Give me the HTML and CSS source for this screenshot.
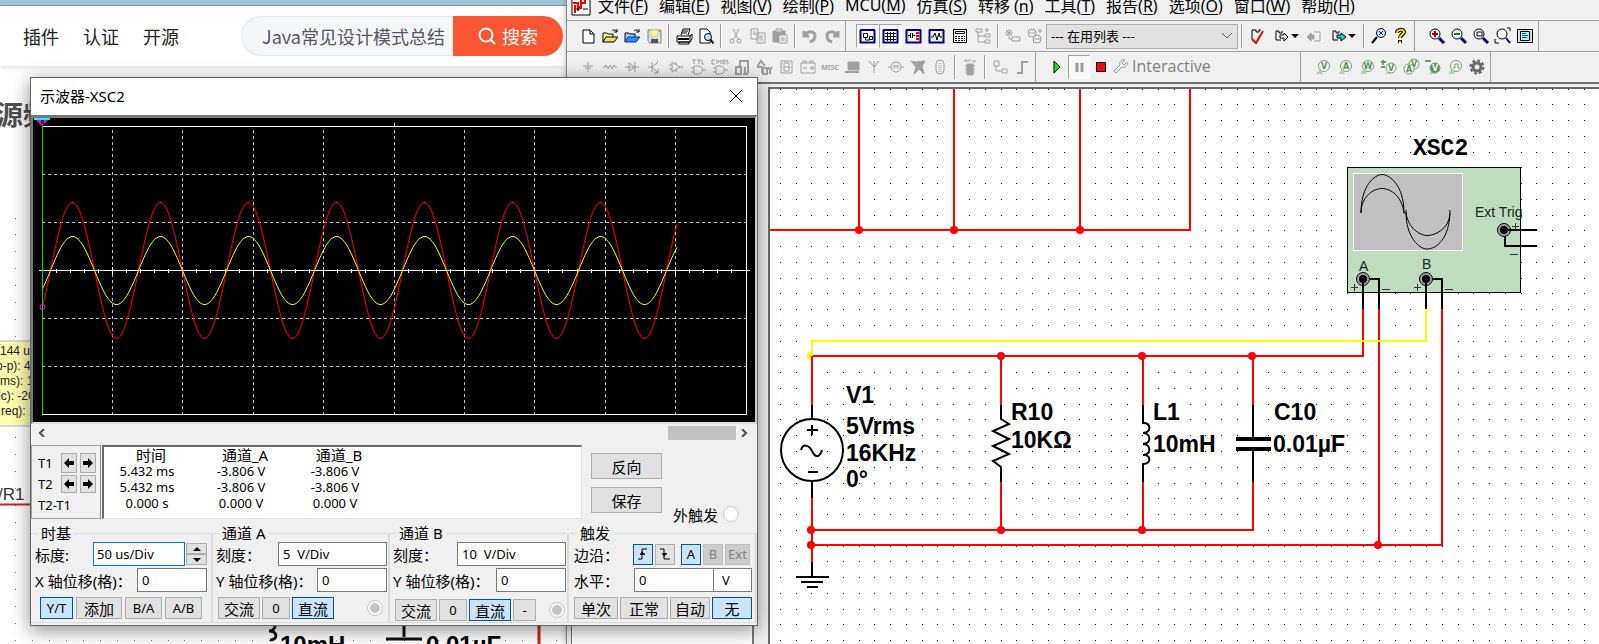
FILE: index.html
```html
<!DOCTYPE html>
<html lang="zh-CN">
<head>
    <meta charset="UTF-8">
    <title>示波器-XSC2</title>
    <link rel="stylesheet" href="styles.css">
</head>
<body>
<div class="desktop">

    <!-- browser window in the back -->
    <div class="site">
        <div class="site-strip"></div>
        <header class="site-header">
            <nav class="site-nav">
                <a href="#">插件</a>
                <a href="#">认证</a>
                <a href="#">开源</a>
            </nav>
            <form class="search">
                <input type="text" aria-label="搜索" placeholder="Java常见设计模式总结">
                <button type="button">
                    <svg width="18" height="18" viewBox="0 0 18 18"><circle cx="8" cy="8" r="6.5"/><path d="M13 13l4 4"/></svg>
                    搜索
                </button>
            </form>
        </header>
        <h1 class="post-title">源频</h1>
        <svg class="post-image">
            <g id="post-dots" fill="#777"></g>
            <rect x="-2" y="147" width="60" height="85" fill="#fffbb0" stroke="#a9b8e0"/>
            <g class="post-note">
                <text x="0" y="161">144 uA</text>
                <text x="-4" y="176">o-p): 48</text>
                <text x="0" y="191">ms): 1</text>
                <text x="-2" y="206">lc): -20</text>
                <text x="1" y="221">req): 1</text>
            </g>
            <path d="M0 310.500h40" stroke="#d02020" stroke-width="2"/>
            <text class="post-ref" x="-2" y="306">/R1</text>
            <path d="M539 425v30" stroke="#d02020" stroke-width="3"/>
            <path d="M269 428c8 -2 8 9 0 9c9 0 9 9 1 9M404 425v18M386 445h36" fill="none" stroke="#111" stroke-width="3"/>
            <text class="post-part" x="280" y="459">10mH</text>
            <text class="post-part" x="426" y="459">0.01µF</text>
        </svg>
    </div>

    <!-- circuit editor -->
    <div class="app">
        <nav class="menubar">
            <svg class="app-logo" width="20" height="24" viewBox="0 0 20 24"><path d="M1 1h18v21H1z" fill="#fff" stroke="#000"/><path d="M2 10h5v8M4 12v8M10 6v10M10 14H6M10 10h4V5" fill="none" stroke="#e00" stroke-width="2"/><path d="M5 16h4M12 16h5" stroke="#000"/></svg>
            <a href="#">文件(<u>F</u>)</a>
            <a href="#">编辑(<u>E</u>)</a>
            <a href="#">视图(<u>V</u>)</a>
            <a href="#">绘制(<u>P</u>)</a>
            <a href="#">MCU(<u>M</u>)</a>
            <a href="#">仿真(<u>S</u>)</a>
            <a href="#">转移 (<u>n</u>)</a>
            <a href="#">工具(<u>T</u>)</a>
            <a href="#">报告(<u>R</u>)</a>
            <a href="#">选项(<u>O</u>)</a>
            <a href="#">窗口(<u>W</u>)</a>
            <a href="#">帮助(<u>H</u>)</a>
        </nav>

        <div class="toolrow">
            <div class="toolbar">
                <button class="tool" aria-label="新建"><svg viewBox="0 0 18 18"><path d="M4 3h7l4 4v9H4zM11 3v4h4" fill="#fff"/></svg></button>
                <button class="tool" aria-label="打开"><svg viewBox="0 0 18 18"><path d="M2 15V6h4l1 1h5v3" fill="#ff9"/><path d="M2 15l3-5h12l-4 5z" fill="#e8e070"/><path d="M11 4c2-2 4-1 5 1M16 2v3h-3"/></svg></button>
                <button class="tool" aria-label="打开示例"><svg viewBox="0 0 18 18"><path d="M2 15V6h4l1 1h5v3" fill="#9cf"/><path d="M2 15l3-5h12l-4 5z" fill="#38f" stroke="#003a9c"/><path d="M11 4c2-2 4-1 5 1M16 2v3h-3"/></svg></button>
                <button class="tool" aria-label="保存"><svg viewBox="0 0 18 18"><path d="M3 3h13v13H5l-2-2z" fill="#ddd" stroke="#888"/><path d="M6 3h7v6H6z" fill="#ff6" stroke="#ccc"/><path d="M6 12h7v4H6z" fill="#555" stroke="none"/><path d="M14 4h1" stroke="#e00"/></svg></button>
                <span class="sep"></span>
                <button class="tool" aria-label="打印"><svg viewBox="0 0 18 18"><path d="M6 8l2-6h7l-2 6M2 9h13v6H2zM4 15h10v2H4zM15 9l2-2v5l-2 3M8 4h5M7 6h5" fill="#fff"/><path d="M3 12h11" stroke-width="2"/></svg></button>
                <button class="tool" aria-label="打印预览"><svg viewBox="0 0 18 18"><path d="M3 2h7l3 3v11H3z" fill="#fff"/><circle cx="11" cy="10" r="3.500" fill="#aef"/><path d="M13.500 12.500l3 4" stroke-width="2"/></svg></button>
                <span class="sep"></span>
                <button class="tool off" aria-label="剪切"><svg viewBox="0 0 18 18"><path d="M6 2l5 10M12 2L7 12"/><circle cx="5" cy="14" r="2"/><circle cx="12" cy="14" r="2"/></svg></button>
                <button class="tool off" aria-label="复制"><svg viewBox="0 0 18 18"><path d="M2 2h7v10H2zM8 6h8v10H8zM4 5h3M4 7h3M10 9h4M10 11h4M10 13h4"/></svg></button>
                <button class="tool off" aria-label="粘贴"><svg viewBox="0 0 18 18"><path d="M2 4h12v11H2z" fill="#a0a0a0"/><path d="M5 2h6v3H5z" fill="#ddd"/><path d="M8 8h8v8H8z" fill="#eee"/><path d="M10 11h4M10 13h4"/></svg></button>
                <span class="sep"></span>
                <button class="tool off" aria-label="撤消"><svg viewBox="0 0 18 18"><path d="M3 4v5h5M4 9c3-6 10-5 10 0c0 3-2 5-5 6" stroke-width="3"/></svg></button>
                <button class="tool off" aria-label="重做"><svg viewBox="0 0 18 18"><path d="M15 4v5h-5M14 9c-3-6-10-5-10 0c0 3 2 5 5 6" stroke-width="3"/></svg></button>
            </div>
            <div class="toolbar wide">
                <button class="tool on" aria-label="设计工具箱"><svg class="navy" viewBox="0 0 18 18"><path d="M1.500 3v12.500h14V3M1 3h15" stroke-width="2"/><path d="M4.500 6.500h4v4h-4zM10.500 9.500h3v3h-3zM6.500 11v2h4" stroke="#000"/></svg></button>
                <button class="tool on" aria-label="电子表格"><svg class="navy" viewBox="0 0 18 18"><path d="M1.500 3v12.500h14V3M1 3h15" stroke-width="2"/><path d="M3 6.500h11M3 9.500h11M3 12.500h11M5.500 5v9M8.500 5v9M11.500 5v9" stroke="#000"/></svg></button>
                <button class="tool" aria-label="SPICE网表"><svg class="navy" viewBox="0 0 18 18"><path d="M1.500 3v12.500h14V3M1 3h15" stroke-width="2" /><path d="M3 8.500h2M5.500 6v5M7.500 6v5M8 8.500h2" stroke="#000"/><path d="M12.500 5v9" stroke="#e00" stroke-width="3" stroke-dasharray="2 1"/></svg></button>
                <button class="tool" aria-label="图示仪"><svg class="navy" viewBox="0 0 18 18"><path d="M1.500 3v12.500h14V3M1 3h15" stroke-width="2"/><path d="M3 10h2l2-4 2 7 2-7 1 4h2" stroke="#000"/></svg></button>
                <button class="tool" aria-label="后处理器"><svg viewBox="0 0 18 18"><path d="M2.500 2.500h13v13h-13z" fill="#fff"/><path d="M4.500 4.500h9v2h-9z"/><path d="M4 9.500h10M4 11.500h10M4 13.500h10" stroke-dasharray="2 1"/></svg></button>
                <button class="tool off" aria-label="层次"><svg viewBox="0 0 18 18"><path d="M2 2h6v3H2zM11 7h5v3h-5zM11 13h5v3h-5zM4 5v10h7M4 9h7M13 5V1M11 3h4"/></svg></button>
                <span class="sep"></span>
                <button class="tool off" aria-label="新建元器件"><svg viewBox="0 0 18 18"><path d="M5 2v8M1 6h8M2 3l6 6M8 3L2 9M8 10h8v4H8zM5 10v2h3"/></svg></button>
                <button class="tool off" aria-label="数据库"><svg viewBox="0 0 18 18"><circle cx="6" cy="6" r="4"/><circle cx="11" cy="12" r="4"/><path d="M3 6h6M8 12h6M12 4h4M14 2v4"/></svg></button>
                <select class="inuse" aria-label="在用列表"><option>--- 在用列表 ---</option></select>
                <span class="sep"></span>
                <button class="tool" aria-label="电气法则查验"><svg viewBox="0 0 18 18"><path d="M4 12V3h4v2h3V3h2"/><path d="M4 12l4 4 7-12" stroke="#e00" stroke-width="2"/></svg></button>
                <button class="tool drop" aria-label="转移到布局"><svg viewBox="0 0 18 18"><path d="M3 4h3v2h3V4M3 4v9h5"/><path d="M7 8h4V6l4 4-4 4v-3H7z" fill="#fff"/></svg><i></i></button>
                <button class="tool off" aria-label="反向注解"><svg viewBox="0 0 18 18"><path d="M2 10l4-4v2h3v4H6v2z" fill="#a0a0a0"/><path d="M9 5h6v9H9"/></svg></button>
                <button class="tool drop" aria-label="正向注解"><svg viewBox="0 0 18 18"><path d="M3 4h3v2h3V4M3 4v9h5"/><path d="M7 8h4V6l5 4-5 4v-3H7z" fill="#0dd"/></svg><i></i></button>
                <span class="sep"></span>
                <button class="tool" aria-label="查找"><svg viewBox="0 0 18 18"><circle cx="11" cy="6" r="4.500" fill="#cfe8e8"/><path d="M9 4l4 4M13 4L9 8" stroke="#00c"/><path d="M7 10l-5 6" stroke-width="2"/></svg></button>
                <button class="tool" aria-label="帮助"><svg viewBox="0 0 18 18"><path d="M5 6c0-4 7-4 7-1c0 2-4 3-4 6M8 13v3" stroke-width="4"/><path d="M5 6c0-4 7-4 7-1c0 2-4 3-4 6M8 14v2" stroke="#fd0" stroke-width="2"/></svg></button>
            </div>
            <div class="toolbar zoom">
                <button class="tool" aria-label="放大"><svg viewBox="0 0 18 18"><circle cx="7" cy="7" r="5" fill="#fff"/><path d="M4 7h6M7 4v6" stroke="#b00000" stroke-width="2"/><path d="M11 11l5 5" stroke="#000080" stroke-width="3"/></svg></button>
                <button class="tool" aria-label="缩小"><svg viewBox="0 0 18 18"><circle cx="7" cy="7" r="5" fill="#fff"/><path d="M4 7h6" stroke="#080" stroke-width="2"/><path d="M11 11l5 5" stroke="#000080" stroke-width="3"/></svg></button>
                <button class="tool" aria-label="缩放区域"><svg viewBox="0 0 18 18"><circle cx="7" cy="7" r="5" fill="#fff"/><path d="M5 5h5v4H5z"/><path d="M11 11l5 5" stroke="#000080" stroke-width="3"/></svg></button>
                <button class="tool" aria-label="缩放页面"><svg viewBox="0 0 18 18"><circle cx="8" cy="7" r="5" fill="#fff"/><path d="M1 12v4h4M13 1h3v3"/><path d="M12 11l4 5" stroke="#000080" stroke-width="2"/></svg></button>
                <button class="tool" aria-label="全屏"><svg viewBox="0 0 18 18"><path d="M1.500 2.500h15v13h-15z" fill="#ddd"/><path d="M4.500 4.500h9v9h-9z" fill="#9ff"/><path d="M6 6.500h4M6 8.500h6M6 10.500h5" stroke="#066"/></svg></button>
            </div>
        </div>

        <div class="toolrow">
            <div class="toolbar">
                <button class="tool off" aria-label="源"><svg viewBox="0 0 18 18"><path d="M9 4v4M4 8h10M6 10h6M9 10v4"/></svg></button>
                <button class="tool off" aria-label="基本"><svg viewBox="0 0 18 18"><path d="M2 9h2l1-2 2 4 2-4 2 4 2-4 1 2h2"/></svg></button>
                <button class="tool off" aria-label="二极管"><svg viewBox="0 0 18 18"><path d="M2 9h14M6 5v8l6-4zM12 4v10"/></svg></button>
                <button class="tool off" aria-label="晶体管"><svg viewBox="0 0 18 18"><path d="M3 9h4M7 4v10M7 9l6-5M7 9l6 6M13 11v4h-4"/></svg></button>
                <button class="tool off" aria-label="模拟"><svg viewBox="0 0 18 18"><path d="M5 4v10l8-5zM2 7h3M2 11h3M13 9h3M9 4v3M9 11v3"/></svg></button>
                <button class="tool off" aria-label="TTL"><svg viewBox="0 0 18 18"><path d="M5 8h4c6 0 6 8 0 8H5zM2 10h3M2 14h3M13 12h4M3 2h4M5 2v4M8 2h4M10 2v4M13 2v4h2"/></svg></button>
                <button class="tool off" aria-label="CMOS"><svg viewBox="0 0 18 18"><path d="M5 8h4c6 0 6 8 0 8H5zM2 10h3M2 14h3M13 12h4M4 2H1v4h3M6 6V2l2 2 2-2v4M12 2h2v4h-2zM17 2h-1v2h1v2h-1"/></svg></button>
                <button class="tool off" aria-label="其他数字"><svg viewBox="0 0 18 18"><path d="M7 9V3h8v12M3 9h5v7H3zM12 9v7M10 16h5" stroke-width="2"/></svg></button>
                <button class="tool off" aria-label="混合"><svg viewBox="0 0 18 18"><path d="M2 9l4-6 4 5M2 9h5v6M8 10h4v6H8zM13 9l2 3 2-3M15 12v4" stroke-width="2"/></svg></button>
                <button class="tool off" aria-label="指示器"><svg viewBox="0 0 18 18"><path d="M4 3h11v12H4zM7 5h5v8H7zM7 9h5M5 5v1M5 9v1M14 9v1"/></svg></button>
                <button class="tool off" aria-label="功率"><svg viewBox="0 0 18 18"><path d="M2 5h14v10H2zM4 5V3h3v2M11 5V3h3v2M4 10h4M11 10h4M13 8v4"/></svg></button>
                <button class="tool off misc" aria-label="杂项">MISC</button>
                <button class="tool off" aria-label="外设"><svg viewBox="0 0 18 18"><path d="M5 4h11v8H5z" fill="#a0a0a0"/><path d="M2 14h14" stroke-width="2"/></svg></button>
                <button class="tool off" aria-label="射频"><svg viewBox="0 0 18 18"><path d="M4 3l5 6 5-6M9 3v12"/></svg></button>
                <button class="tool off" aria-label="机电"><svg viewBox="0 0 18 18"><circle cx="9" cy="9" r="5"/><path d="M1 9h3M14 9h3M7 11V7l2 2 2-2v4"/></svg></button>
                <button class="tool off" aria-label="NI元器件"><svg viewBox="0 0 18 18"><path d="M2 3c5 2 9 0 14 0l-3 5 2 8-5-5-5 5 2-7z" fill="#a0a0a0"/></svg></button>
                <button class="tool off" aria-label="连接器"><svg viewBox="0 0 18 18"><rect x="5" y="2" width="8" height="14" rx="4"/><path d="M8 5v9M10 5v9" stroke-dasharray="1 1"/></svg></button>
                <span class="sep"></span>
                <button class="tool off" aria-label="MCU"><svg viewBox="0 0 18 18"><path d="M6 6h6v11H6z" fill="#a0a0a0"/><path d="M4 8h10M4 11h10M4 14h10M4 4V2h2v2M8 4V2h2M12 2v2h2V2"/></svg></button>
                <span class="sep"></span>
                <button class="tool off" aria-label="层次块"><svg viewBox="0 0 18 18"><path d="M3 3h5v5H3zM5 8v5h5M11 11h5v4h-5z"/></svg></button>
                <button class="tool off" aria-label="总线"><svg viewBox="0 0 18 18"><path d="M4 15h5V4h6" stroke-width="2"/></svg></button>
            </div>
            <div class="toolbar sim">
                <button class="tool" aria-label="运行"><svg viewBox="0 0 18 18"><path d="M6 3v12l6-6z" fill="#0e0"/></svg></button>
                <button class="tool on" aria-label="暂停"><svg viewBox="0 0 18 18"><path d="M7 5v9M12 5v9" stroke="#999" stroke-width="3"/></svg></button>
                <button class="tool" aria-label="停止"><svg viewBox="0 0 18 18"><path d="M4.500 4.500h9v9h-9z" fill="red"/></svg></button>
                <a class="mode" href="#"><svg width="18" height="18" viewBox="0 0 18 18"><path d="M4 16l-2-2 6-6c-1-4 2-6 5-5l-3 3 2 2 3-3c1 4-2 6-5 5z" fill="none" stroke="#999"/></svg>Interactive</a>
            </div>
            <div class="toolbar probes">
                <button class="tool" aria-label="电压探针"><svg class="probe" viewBox="0 0 18 18"><path d="M2 16l4-5 3 5z"/><circle cx="10" cy="8" r="5.500"/><text x="10" y="11">V</text></svg></button>
                <button class="tool" aria-label="电流探针"><svg class="probe" viewBox="0 0 18 18"><path d="M2 16l4-5 3 5z"/><circle cx="10" cy="8" r="5.500"/><text x="10" y="11">A</text></svg></button>
                <button class="tool" aria-label="功率探针"><svg class="probe" viewBox="0 0 18 18"><path d="M2 16l4-5 3 5z"/><circle cx="10" cy="8" r="5.500"/><text x="10" y="11">W</text></svg></button>
                <button class="tool" aria-label="差分探针"><svg class="probe" viewBox="0 0 18 18"><path d="M5 16l3-4 3 4z"/><circle cx="11" cy="10" r="5"/><text x="11" y="13">V</text><path d="M1 4h5M3 2v5M1 9h4" stroke="#6f9a6f" stroke-width="2"/></svg></button>
                <button class="tool" aria-label="电压电流探针"><svg class="probe" viewBox="0 0 18 18"><circle cx="12" cy="6" r="5"/><text x="12" y="9">V</text><circle cx="7" cy="11" r="5"/><text x="7" y="14">A</text></svg></button>
                <button class="tool" aria-label="参考探针"><svg class="probe" viewBox="0 0 18 18"><path d="M5 16l3-4 3 4z"/><path d="M1 3h6" stroke="#6f9a6f" stroke-width="2"/><circle class="dark" cx="11" cy="10" r="5"/><text class="light" x="11" y="13">V</text></svg></button>
                <button class="tool" aria-label="数字探针"><svg class="probe" viewBox="0 0 18 18"><path d="M2 16l4-5 3 5z"/><circle cx="10" cy="8" r="5.500"/><path d="M7 10h2V6h3v4h2" fill="none" stroke="#6f9a6f"/></svg></button>
                <button class="tool" aria-label="探针设置"><svg viewBox="0 0 18 18"><circle cx="9" cy="9" r="4" stroke="#666" stroke-width="3"/><circle cx="9" cy="9" r="6.500" stroke="#666" stroke-width="2" stroke-dasharray="3 2"/></svg></button>
            </div>
        </div>

        <div class="workspace">
            <div class="toolbox"></div>
            <div class="sheet">
                <svg class="schematic">
                    <g transform="translate(-770 -89)">
                        <g id="grid-dots" shape-rendering="crispEdges"></g>
                        <rect x="1347.500" y="167.500" width="173" height="125" fill="#c0dcc0" stroke="#000"/>
                        <rect x="1353.500" y="173.500" width="109" height="77" fill="#c0c0c0" stroke="#fff"/>
                        <g fill="none" stroke="#000">
                            <path d="M1361 213c0 -28 14 -38.500 21 -38.500s22 10 22 38.500M1361 213c0 -16 12 -24.500 21 -24.500s20 8 22 24.500l2 0c0 22 12 36 21 36s23 -10 23 -39M1406 210c0 15 12 25.500 21 25.500s22 -7 23 -22"/>
                        </g>
                        <g class="wire">
                            <path d="M770 230H1190V80M859 230V80M954 230V80M1080 230V80"/>
                            <path d="M812 405V356H1363V309M812 498V562M812 530H1253V482M812 545H1442V309M1379 309V545"/>
                            <path d="M1001 356V405M1001 482V530M1143 356V405M1143 482V530M1253 356V405"/>
                            <path d="M812 356V341H1426V309" stroke="#ff0"/>
                        </g>
                        <g class="pin">
                            <path d="M812 405V419M812 481V498M812 562V577M796 577H829M801 582H823M807 587H818"/>
                            <circle cx="812" cy="450" r="31"/>
                            <path d="M807 430H818M812 425V435M808 472H818M801 450C803 443 809 445 812 451S819 459 822 450"/>
                            <path d="M1001 405V419L1009 424L993 431L1009 439L993 446L1009 454L993 461L1001 467V482"/>
                            <path d="M1143 405V423C1151 422 1152 433 1143 433C1151 433 1152 444 1143 444C1151 444 1152 455 1143 455C1151 454 1152 464 1143 464V482"/>
                            <path d="M1253 405V438M1253 451V482"/>
                            <path d="M1236 439H1271M1236 449H1271" stroke-width="4"/>
                            <path d="M1363 279V309M1363 279H1379V309M1426 279V309M1426 279H1442V309M1504 230H1537M1505 230V246H1537"/>
                        </g>
                        <g fill="#a0a0a4" stroke="#000">
                            <circle cx="1363" cy="279" r="6.500"/><circle cx="1426" cy="279" r="6.500"/><circle cx="1504" cy="230" r="6.500"/>
                        </g>
                        <circle cx="1363" cy="279" r="4"/><circle cx="1426" cy="279" r="4"/><circle cx="1504" cy="230" r="4"/>
                        <path class="pin" d="M1363 279V292M1426 279V292M1504 230H1520"/>
                        <path d="M1351 287.500H1358M1354.500 284V291M1382 289.500H1390M1414 287.500H1421M1417.500 284V291M1445 289.500H1453M1512 226.500H1519M1515.500 223V230M1510 254.500H1518" stroke="#333"/>
                        <g class="dot">
                            <circle cx="859" cy="230" r="4"/><circle cx="954" cy="230" r="4"/><circle cx="1080" cy="230" r="4"/>
                            <circle cx="1001" cy="356" r="4"/><circle cx="1142" cy="356" r="4"/><circle cx="1252" cy="356" r="4"/>
                            <circle cx="811" cy="530" r="4"/><circle cx="1001" cy="530" r="4"/><circle cx="1142" cy="530" r="4"/>
                            <circle cx="811" cy="545" r="4"/><circle cx="1378" cy="545" r="4"/>
                            <path d="M811 352v8a4 4 0 0 1 0 -8z" fill="#ff0"/>
                        </g>
                        <g class="part">
                            <text x="846" y="403">V1</text>
                            <text x="846" y="434">5Vrms</text>
                            <text x="846" y="461">16KHz</text>
                            <text x="846" y="487">0°</text>
                            <text x="1011" y="420">R10</text>
                            <text x="1011" y="448">10KΩ</text>
                            <text x="1153" y="420">L1</text>
                            <text x="1153" y="452">10mH</text>
                            <text x="1274" y="420">C10</text>
                            <text x="1273" y="452">0.01µF</text>
                        </g>
                        <text class="scope-name" x="1413" y="155">XSC2</text>
                        <g class="pin-name">
                            <text x="1475" y="217">Ext Trig</text>
                            <text x="1359" y="271">A</text>
                            <text x="1422" y="269">B</text>
                        </g>
                    </g>
                </svg>
            </div>
        </div>
    </div>

    <!-- oscilloscope -->
    <div class="dialog">
        <div class="titlebar">
            <span>示波器-XSC2</span>
            <button class="close" aria-label="关闭"><svg width="12" height="12" viewBox="0 0 12 12"><path d="M0 0l12 12M12 0L0 12" stroke="#000"/></svg></button>
        </div>
        <div class="screen">
            <svg id="scope" width="100%" height="304" viewBox="34 118 720 304" preserveAspectRatio="xMinYMin">
                <g id="scope-grid" stroke="#c0c0c0" stroke-dasharray="3 3" shape-rendering="crispEdges"></g>
                <path id="scope-axis" stroke="#fff" fill="none" shape-rendering="crispEdges"></path>
                <path id="wave-a" stroke="#f00" fill="none"></path>
                <path id="wave-b" stroke="#ff0" fill="none"></path>
                <path d="M42.500 126V414" stroke="#00e000"/>
                <path d="M34 118h16l-8 8z" fill="#f0f"/><path d="M34 118h16v2H34z" fill="#0ff"/><path d="M41 120h3v4h-3z" fill="#330"/>
                <circle cx="42.500" cy="307" r="2.500" fill="none" stroke="#f0f"/>
            </svg>
        </div>
        <div class="scroll">
            <button aria-label="向左"><svg width="6" height="8" viewBox="0 0 6 8"><path d="M5 0L1 4l4 4"/></svg></button>
            <div class="track"><div class="thumb"></div></div>
            <button aria-label="向右"><svg width="6" height="8" viewBox="0 0 6 8"><path d="M1 0l4 4-4 4"/></svg></button>
        </div>
        <div class="readout">
            <div class="cursors">
                <span>T1</span>
                <button class="btn" aria-label="T1 向左"><svg width="10" height="10" viewBox="0 0 10 10"><path d="M0 5l5-5v3h5v4H5v3z"/></svg></button>
                <button class="btn" aria-label="T1 向右"><svg width="10" height="10" viewBox="0 0 10 10"><path d="M10 5L5 0v3H0v4h5v3z"/></svg></button>
                <span>T2</span>
                <button class="btn" aria-label="T2 向左"><svg width="10" height="10" viewBox="0 0 10 10"><path d="M0 5l5-5v3h5v4H5v3z"/></svg></button>
                <button class="btn" aria-label="T2 向右"><svg width="10" height="10" viewBox="0 0 10 10"><path d="M10 5L5 0v3H0v4h5v3z"/></svg></button>
                <span class="diff">T2-T1</span>
            </div>
            <div class="values">
                <table>
                    <tr><th>时间</th><th>通道_A</th><th>通道_B</th></tr>
                    <tr><td>5.432 ms</td><td>-3.806 V</td><td>-3.806 V</td></tr>
                    <tr><td>5.432 ms</td><td>-3.806 V</td><td>-3.806 V</td></tr>
                    <tr><td>0.000 s</td><td>0.000 V</td><td>0.000 V</td></tr>
                </table>
            </div>
            <div class="actions">
                <button class="btn">反向</button>
                <button class="btn">保存</button>
            </div>
            <label class="ext">外触发 <input type="radio" name="ext"></label>
        </div>
        <div class="groups">
            <fieldset>
                <legend>时基</legend>
                <div class="line">
                    <label for="timebase">标度:</label>
                    <input class="text w92 focus" type="text" id="timebase" value="50 us/Div">
                    <span class="spin"><button class="btn" aria-label="增加"><i class="up"></i></button><button class="btn" aria-label="减少"><i class="down"></i></button></span>
                </div>
                <div class="line">
                    <label for="xpos">X 轴位移(格)：</label>
                    <input class="text w70" type="text" id="xpos" value="0">
                </div>
                <div class="line buttons indent">
                    <button class="btn active w33">Y/T</button>
                    <button class="btn w46">添加</button>
                    <button class="btn w37">B/A</button>
                    <button class="btn w37">A/B</button>
                </div>
            </fieldset>
            <fieldset>
                <legend>通道 A</legend>
                <div class="line">
                    <label for="scale-a">刻度：</label>
                    <input class="text w109" type="text" id="scale-a" value="5  V/Div">
                </div>
                <div class="line">
                    <label for="ypos-a">Y 轴位移(格)：</label>
                    <input class="text w70" type="text" id="ypos-a" value="0">
                </div>
                <div class="line buttons inset">
                    <button class="btn w42">交流</button>
                    <button class="btn w28">0</button>
                    <button class="btn active w42">直流</button>
                    <input type="radio" name="chan-a" aria-label="通道 A" checked disabled>
                </div>
            </fieldset>
            <fieldset>
                <legend>通道 B</legend>
                <div class="line">
                    <label for="scale-b">刻度：</label>
                    <input class="text w109" type="text" id="scale-b" value="10  V/Div">
                </div>
                <div class="line">
                    <label for="ypos-b">Y 轴位移(格)：</label>
                    <input class="text w70" type="text" id="ypos-b" value="0">
                </div>
                <div class="line buttons inset low">
                    <button class="btn w42">交流</button>
                    <button class="btn w28">0</button>
                    <button class="btn active w42">直流</button>
                    <button class="btn w23">-</button>
                    <input type="radio" name="chan-b" aria-label="通道 B" checked disabled>
                </div>
            </fieldset>
            <fieldset class="trigger">
                <legend>触发</legend>
                <div class="line edge">
                    <span class="name">边沿：</span>
                    <button class="btn active w20" aria-label="上升沿"><svg width="12" height="12" viewBox="0 0 12 12"><path class="stroke" d="M1 11h4V1h5M3 6h5"/><path d="M5 3l3 4H3z"/></svg></button>
                    <button class="btn w20" aria-label="下降沿"><svg width="12" height="12" viewBox="0 0 12 12"><path class="stroke" d="M1 1h4v10h6M3 6h5"/><path d="M5 9l3-4H3z"/></svg></button>
                    <button class="btn active w20 after">A</button>
                    <button class="btn w20" disabled>B</button>
                    <button class="btn w25" disabled>Ext</button>
                </div>
                <div class="line level">
                    <label for="level">水平：</label>
                    <input class="text w80" type="text" id="level" value="0">
                    <input class="text unit" type="text" aria-label="单位" value="V">
                </div>
                <div class="line buttons">
                    <button class="btn w44">单次</button>
                    <button class="btn w48">正常</button>
                    <button class="btn w40">自动</button>
                    <button class="btn active w40">无</button>
                </div>
            </fieldset>
        </div>
    </div>
</div>
<script src="script.js"></script>
</body>
</html>
```
FILE: styles.css
```css
* {
    box-sizing: border-box;
}
body {
    margin: 0;
    font-family: "Noto Sans", "Noto Sans CJK SC", sans-serif;
    font-size: 13px;
    color: #000;
}
button, input, select {
    font: inherit;
    color: inherit;
    margin: 0;
    padding: 0;
    border-radius: 0;
}
a {
    color: inherit;
    text-decoration: none;
}
.desktop {
    position: relative;
    height: 100vh;
    overflow: hidden;
    background: #fff;
}

/* browser */
.site {
    position: absolute;
    top: 0;
    bottom: 0;
    left: 0;
    width: 566px;
    overflow: hidden;
    font-family: "Noto Sans CJK SC", sans-serif;
}
.site-strip {
    height: 6px;
    background: #a0c4da;
    border-bottom: 1px solid #7a94ac;
}
.site-header {
    display: flex;
    align-items: center;
    justify-content: space-between;
    height: 60px;
    padding: 0 3px 0 23px;
    font-size: 18px;
    color: #222;
    box-shadow: 0 2px 4px #0000001a;
}
.site-nav {
    display: flex;
    gap: 24px;
}
.search {
    display: flex;
    width: 322px;
    height: 40px;
}
.search input {
    flex: 1;
    min-width: 0;
    padding-left: 20px;
    background: #f5f6f7;
    border: 1px solid #e6e8ea;
    border-right: 0;
    border-radius: 20px 0 0 20px;
}
.search input::placeholder {
    color: #555566;
}
.search button {
    display: flex;
    align-items: center;
    justify-content: center;
    gap: 6px;
    width: 110px;
    background: #fc5531;
    border: 0;
    border-radius: 0 20px 20px 0;
    color: #fff;
}
.search svg {
    fill: none;
    stroke: #fff;
    stroke-width: 2;
}
.post-title {
    margin: 30px 0 0 -4px;
    font-size: 27px;
    line-height: 36px;
    color: #4d4d4d;
}
.post-image {
    position: absolute;
    top: 194px;
    left: 0;
    width: 100%;
    height: 460px;
}
.post-note {
    font: 12px "Liberation Sans", sans-serif;
    fill: #222;
}
.post-ref {
    font: 17px "Liberation Sans", sans-serif;
    fill: #333;
}
.post-part {
    font: bold 24px "Liberation Sans", sans-serif;
}

/* circuit editor */
.app {
    position: absolute;
    top: -8px;
    right: 0;
    bottom: 0;
    left: 566px;
    display: flex;
    flex-direction: column;
    background: #f0f0f0;
    border-left: 1px solid #8a8a8a;
    box-shadow: 0 0 6px #0000004d;
}
.menubar {
    display: flex;
    align-items: center;
    gap: 11px;
    height: 28px;
    padding: 0 0 2px 4px;
    font-size: 16px;
    white-space: nowrap;
}
.menubar u {
    text-underline-offset: 2px;
}
.app-logo {
    margin-right: -4px;
}
.toolrow {
    display: flex;
    height: 31px;
    border-top: 1px solid #a0a0a0;
}
.toolbar {
    display: flex;
    align-items: center;
    padding: 0 2px 0 10px;
    border-right: 1px solid #a0a0a0;
}
.tool {
    display: flex;
    align-items: center;
    justify-content: center;
    flex: none;
    width: 22px;
    height: 24px;
    background: none;
    border: 1px solid transparent;
}
.wide .tool:nth-of-type(-n+6) {
    width: 23px;
}
.wide .drop {
    width: 35px;
}
.tool svg {
    flex: none;
    width: 18px;
    height: 18px;
    fill: none;
    stroke: #000;
}
.tool.off svg {
    stroke: #a0a0a0;
}
.tool.on {
    border-color: #a0a0a0 #fff #fff #a0a0a0;
    background: #f8f8f8;
}
.tool .navy {
    stroke: #000080;
}
.tool i {
    border: 4px solid transparent;
    border-top-color: #000;
    border-bottom: 0;
}
.misc {
    font-size: 7px;
    font-weight: bold;
    color: #a0a0a0;
}
.tool .probe {
    stroke: none;
    fill: #b5d6b0;
}
.probe circle {
    fill: #f4f8f4;
    stroke: #7aa37a;
}
.probe .dark {
    fill: #5f8f5f;
}
.probe text {
    font: bold 8px "DejaVu Sans", sans-serif;
    text-anchor: middle;
    fill: #5f8f5f;
}
.probe .light {
    fill: #fff;
}
.sep {
    width: 2px;
    height: 24px;
    margin: 0 3px;
    border-left: 1px solid #a0a0a0;
    border-right: 1px solid #fff;
}
.inuse {
    width: 192px;
    height: 25px;
    padding-left: 4px;
    appearance: none;
    border: 1px solid #adadad;
    background: #e1e1e1 url("data:image/svg+xml,%3Csvg xmlns='http://www.w3.org/2000/svg' width='10' height='6'%3E%3Cpath d='M0 0l5 5 5-5' fill='none' stroke='%23555'/%3E%3C/svg%3E") no-repeat right 5px center;
}
.zoom {
    padding-left: 11px;
}
.sim {
    width: 265px;
}
.probes {
    padding-left: 11px;
}
.mode {
    display: flex;
    align-items: center;
    gap: 2px;
    padding-bottom: 3px;
    font-family: "Open Sans", sans-serif;
    font-size: 16px;
    color: #808080;
}
.workspace {
    display: flex;
    flex: 1;
    min-height: 0;
    padding-left: 4px;
    border-top: 2px solid #707070;
}
.toolbox {
    width: 183px;
    background: linear-gradient(#e8e8e8, #fff 90px) #fff;
    border-left: 1px solid #777;
    border-right: 2px solid #777;
}
.sheet {
    flex: 1;
    min-width: 0;
    margin: 3px 0 0 14px;
    border-top: 2px solid #696969;
    border-left: 2px solid #696969;
    background: #fff;
}
.schematic {
    display: block;
    width: 100%;
    height: 100%;
}
.wire {
    fill: none;
    stroke: #f00;
    stroke-width: 2;
}
.pin {
    fill: none;
    stroke: #000;
    stroke-width: 2;
}
.dot {
    fill: #f00;
}
.part {
    font: bold 23px "Liberation Sans", sans-serif;
}
.scope-name {
    font: bold 23px "Liberation Mono", monospace;
}
.pin-name {
    font: 14px "Liberation Sans", sans-serif;
    fill: #222;
}

/* oscilloscope */
.dialog {
    position: absolute;
    top: 77px;
    left: 30px;
    width: 728px;
    background: #f0f0f0;
    border: 1px solid #666;
    box-shadow: 0 4px 18px #00000073;
}
.titlebar {
    display: flex;
    align-items: center;
    justify-content: space-between;
    height: 37px;
    padding: 0 15px 2px 9px;
    background: #fff;
    font-size: 15px;
}
.close {
    display: flex;
    background: none;
    border: 0;
}
.screen {
    padding: 0 0 0 1px;
    background: #000;
    border: 2px solid #777;
    border-top-width: 3px;
    border-right-color: #ccc;
    border-bottom-color: #ddd;
}
.screen svg {
    display: block;
}
.scroll {
    display: flex;
    align-items: center;
    height: 16px;
    margin-top: 1px;
    padding: 0 3px;
}
.scroll button {
    display: flex;
    width: 18px;
    padding: 0 5px;
    background: none;
    border: 0;
}
.scroll svg {
    fill: none;
    stroke: #505050;
    stroke-width: 2;
}
.track {
    display: flex;
    flex: 1;
    justify-content: flex-end;
}
.thumb {
    width: 68px;
    height: 14px;
    background: #c1c1c1;
}
.readout {
    display: flex;
    margin-top: 4px;
    height: 74px;
}
.cursors {
    display: grid;
    grid-template-columns: 20px 16px 16px;
    grid-template-rows: 20px 18px 20px;
    gap: 2px 3px;
    align-items: center;
    width: 70px;
    padding: 7px 0 0 6px;
    border: 1px solid #a0a0a0;
    border-right-color: #888;
}
.cursors .btn {
    height: 100%;
}
.cursors .diff {
    grid-column: 1 / 4;
}
.values {
    flex: none;
    width: 480px;
    margin-left: 1px;
    background: #fff;
    border: 1px solid #e0e0e0;
    border-top: 2px solid #696969;
    border-left: 2px solid #696969;
}
.values table {
    border-collapse: collapse;
    table-layout: fixed;
    width: 282px;
    line-height: 16px;
}
.values td, .values th {
    padding: 0 8px 0 0;
    font-weight: 400;
    text-align: center;
    white-space: nowrap;
}
.values th {
    height: 16px;
    padding: 0;
    font-size: 15px;
}
.btn {
    display: flex;
    align-items: center;
    justify-content: center;
    flex: none;
    background: #e1e1e1;
    border: 1px solid #adadad;
    white-space: nowrap;
}
.btn.active {
    background: #cce4f7;
    border-color: #005499;
}
.btn:disabled {
    background: #ccc;
    border-color: #bfbfbf;
    color: #838383;
}
.stroke {
    fill: none;
    stroke: #000;
}
.actions {
    display: flex;
    flex-direction: column;
    gap: 8px;
    padding: 8px 0 0 9px;
    font-size: 15px;
}
.actions .btn {
    width: 71px;
    height: 26px;
}
.ext {
    display: flex;
    align-items: center;
    align-self: flex-end;
    gap: 5px;
    height: 16px;
    margin: 0 0 -3px 11px;
    font-size: 15px;
    white-space: nowrap;
}
input[type="radio"] {
    flex: none;
    width: 16px;
    height: 16px;
    appearance: none;
    background: #fff;
    border: 1px solid #ccc;
    border-radius: 50%;
}
input[type="radio"]:checked {
    background: #c4c4c4;
    box-shadow: inset 0 0 0 2px #fff;
}
.groups {
    display: grid;
    grid-template-columns: 182px 177px 179px 1fr;
    margin-top: 5px;
    padding-bottom: 2px;
}
fieldset {
    min-width: 0;
    margin: 0;
    padding: 0 4px 3px;
    border: 1px solid #dcdcdc;
    border-left: 0;
    border-right-width: 2px;
}
legend {
    margin-left: 3px;
    padding: 0 3px;
    line-height: 18px;
    font-size: 15px;
}
fieldset:not(:first-child) {
    padding-left: 3px;
    padding-right: 1px;
}
fieldset.trigger:not(:first-child) {
    padding-left: 5px;
    padding-right: 3px;
}
.line {
    display: flex;
    align-items: center;
    height: 24px;
    margin-bottom: 2px;
}
.line label, .name {
    flex: 1;
    font-size: 15px;
    white-space: nowrap;
}
.line label {
    min-width: 0;
}
.text {
    height: 24px;
    padding: 0 4px;
    background: #fff;
    border: 1px solid #7a7a7a;
    outline: 0;
    white-space: pre;
}
.focus {
    padding-left: 3px;
    border-color: #0078d7;
}
.spin {
    display: flex;
    flex-direction: column;
    margin-left: 1px;
}
.spin .btn {
    width: 21px;
    height: 11px;
}
.spin i {
    border: 4px solid transparent;
}
.spin .up {
    border-top: 0;
    border-bottom-color: #000;
}
.spin .down {
    border-bottom: 0;
    border-top-color: #000;
}
.buttons {
    gap: 2px;
    height: 22px;
    margin: 5px 0 0;
}
.buttons .btn {
    height: 22px;
}
.buttons .w40, .buttons .w42, .buttons .w44, .buttons .w46, .buttons .w48 {
    font-size: 15px;
}
.buttons input {
    margin-left: auto;
    margin-right: 4px;
}
.indent {
    gap: 3px;
    padding-left: 5px;
}
.inset {
    padding-left: 2px;
}
.low {
    padding-top: 4px;
}
.low input {
    margin-right: 1px;
}
.edge .btn {
    height: 21px;
    margin-right: 2px;
}
.edge .after {
    margin-left: 4px;
}
.level .text + .text {
    margin-left: -1px;
}
.w20 { width: 20px; }
.w23 { width: 23px; }
.w25 { width: 25px; }
.w28 { width: 28px; }
.w33 { width: 33px; }
.w37 { width: 37px; }
.w40 { width: 40px; }
.w42 { width: 42px; }
.w44 { width: 44px; }
.w46 { width: 46px; }
.w48 { width: 48px; }
.w70 { width: 70px; }
.w80 { width: 80px; }
.w92 { width: 92px; }
.w109 { width: 109px; }
.unit {
    width: 39px;
    padding-left: 8px;
}
```
FILE: script.js
```js
(function () {
  const NS = 'http://www.w3.org/2000/svg'

  function add (parent, name, attrs) {
    let el = document.createElementNS(NS, name)
    for (let key in attrs) {
      el.setAttribute(key, attrs[key])
    }
    parent.appendChild(el)
  }

  // one pixel dots of the drawing sheet
  function dots (id, left, top, right, bottom, step) {
    let parent = document.getElementById(id)
    let d = ''
    for (let y = top; y < bottom; y += step) {
      for (let x = left; x < right; x += step) {
        d += 'M' + Math.floor(x) + ' ' + Math.floor(y) + 'h1v1h-1z'
      }
    }
    add(parent, 'path', { d: d })
  }

  dots('grid-dots', 780.4, 89.02, 1590, 660, 15.76)
  dots('post-dots', -1, 24, 560, 460, 16.9)

  // graticule, 10 divisions wide and 6 high
  let grid = document.getElementById('scope-grid')
  for (let i = 1; i < 10; i++) {
    add(grid, 'path', { d: 'M' + (Math.floor(42 + i * 70.4) + 0.5) + ' 130V414' })
  }
  for (let i = 1; i < 6; i++) {
    add(grid, 'path', { d: 'M42 ' + (126.5 + i * 48) + 'H746' })
  }
  let axis = 'M42 126.5H746.5V414.5H42M39 270.5H750M394.5 123V127'
  for (let i = 1; i < 50; i++) {
    let size = i % 5 ? 2 : 4
    axis += 'M' + (Math.floor(42 + i * 14.08) + 0.5) + ' ' + (271 - size) + 'v' + (size * 2)
  }
  document.getElementById('scope-axis').setAttribute('d', axis)

  function wave (id, amplitude) {
    let d = ''
    for (let x = 42; x <= 677; x++) {
      let y = 270.5 - amplitude * Math.sin((x - 50.5) / 88 * 2 * Math.PI)
      d += (d ? 'L' : 'M') + x + ' ' + y.toFixed(1)
    }
    document.getElementById(id).setAttribute('d', d)
  }

  wave('wave-a', 68)
  wave('wave-b', 34)
})()
```
